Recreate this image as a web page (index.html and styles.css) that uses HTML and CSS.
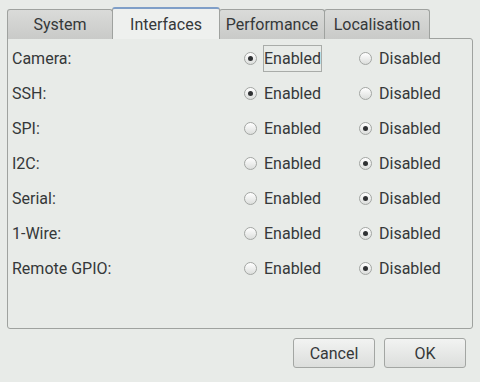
FILE: index.html
```html
<!DOCTYPE html>
<html lang="en">
  <head>
    <meta charset="UTF-8">
    <title>Raspberry Pi Configuration</title>
    <link rel="stylesheet" href="styles.css">
  </head>
  <body>
    <div class="dialog">
      <div class="tabs">
        <div class="tab">System</div>
        <div class="tab active">Interfaces</div>
        <div class="tab">Performance</div>
        <div class="tab">Localisation</div>
      </div>
      <div class="panel">
        <div class="row">
          <span class="label">Camera:</span>
          <span class="opt"><span class="radio on"></span><span class="text focus">Enabled</span></span>
          <span class="opt"><span class="radio"></span><span class="text">Disabled</span></span>
        </div>
        <div class="row">
          <span class="label">SSH:</span>
          <span class="opt"><span class="radio on"></span><span class="text">Enabled</span></span>
          <span class="opt"><span class="radio"></span><span class="text">Disabled</span></span>
        </div>
        <div class="row">
          <span class="label">SPI:</span>
          <span class="opt"><span class="radio"></span><span class="text">Enabled</span></span>
          <span class="opt"><span class="radio on"></span><span class="text">Disabled</span></span>
        </div>
        <div class="row">
          <span class="label">I2C:</span>
          <span class="opt"><span class="radio"></span><span class="text">Enabled</span></span>
          <span class="opt"><span class="radio on"></span><span class="text">Disabled</span></span>
        </div>
        <div class="row">
          <span class="label">Serial:</span>
          <span class="opt"><span class="radio"></span><span class="text">Enabled</span></span>
          <span class="opt"><span class="radio on"></span><span class="text">Disabled</span></span>
        </div>
        <div class="row">
          <span class="label">1-Wire:</span>
          <span class="opt"><span class="radio"></span><span class="text">Enabled</span></span>
          <span class="opt"><span class="radio on"></span><span class="text">Disabled</span></span>
        </div>
        <div class="row">
          <span class="label">Remote GPIO:</span>
          <span class="opt"><span class="radio"></span><span class="text">Enabled</span></span>
          <span class="opt"><span class="radio on"></span><span class="text">Disabled</span></span>
        </div>
      </div>
      <div class="buttons">
        <button class="btn">Cancel</button>
        <button class="btn">OK</button>
      </div>
    </div>
  </body>
</html>
```

FILE: styles.css
```css
*{
    margin: 0;
    padding: 0;
    box-sizing: border-box;
}

body{
    background: #e8ebe8;
    font-family: Roboto, "Liberation Sans", sans-serif;
    font-size: 16px;
    color: #353839;
    width: 480px;
    height: 382px;
    overflow: hidden;
}

.dialog{
    padding: 7px 7px 0 7px;
}

.tabs{
    display: flex;
    align-items: flex-end;
    height: 32px;
}

.tab{
    width: 106px;
    height: 30px;
    margin-right: -1px;
    border: 1px solid #9fa29f;
    border-bottom: 0;
    border-radius: 3px 3px 0 0;
    background: linear-gradient(#dadbd9, #c9cac8);
    text-align: center;
    line-height: 30px;
}

.tab.active{
    width: 108px;
    height: 32px;
    position: relative;
    z-index: 1;
    background: #eef0ee;
    border-top: 2px solid #7f9fc8;
    line-height: 32px;
}

.panel{
    height: 291px;
    margin-top: -1px;
    border: 1px solid #9fa29f;
    border-radius: 0 3px 3px 3px;
    padding: 2px 0 0 4px;
}

.row{
    display: grid;
    grid-template-columns: 232px 115px 1fr;
    align-items: center;
    height: 35px;
}

.opt{
    display: flex;
    align-items: center;
}

.radio{
    width: 13px;
    height: 13px;
    border: 1px solid #a3a6a3;
    border-radius: 50%;
    background: linear-gradient(#ffffff, #dcdedc);
    display: flex;
    align-items: center;
    justify-content: center;
    margin-right: 6px;
}

.radio.on::after{
    content: "";
    width: 5px;
    height: 5px;
    border-radius: 50%;
    background: #2f3133;
}

.text{
    padding: 2px 0;
    border: 1px solid transparent;
}

.text.focus{
    border-color: #a9aca9;
    padding: 3px 0;
}

.buttons{
    display: flex;
    justify-content: flex-end;
    gap: 9px;
    padding: 9px 7px 0 0;
}

.btn{
    width: 82px;
    height: 30px;
    border: 1px solid #a3a6a3;
    border-radius: 3px;
    background: linear-gradient(#f2f3f2, #dcdedc);
    font-family: Roboto, "Liberation Sans", sans-serif;
    font-size: 16px;
    color: #353839;
}
```
